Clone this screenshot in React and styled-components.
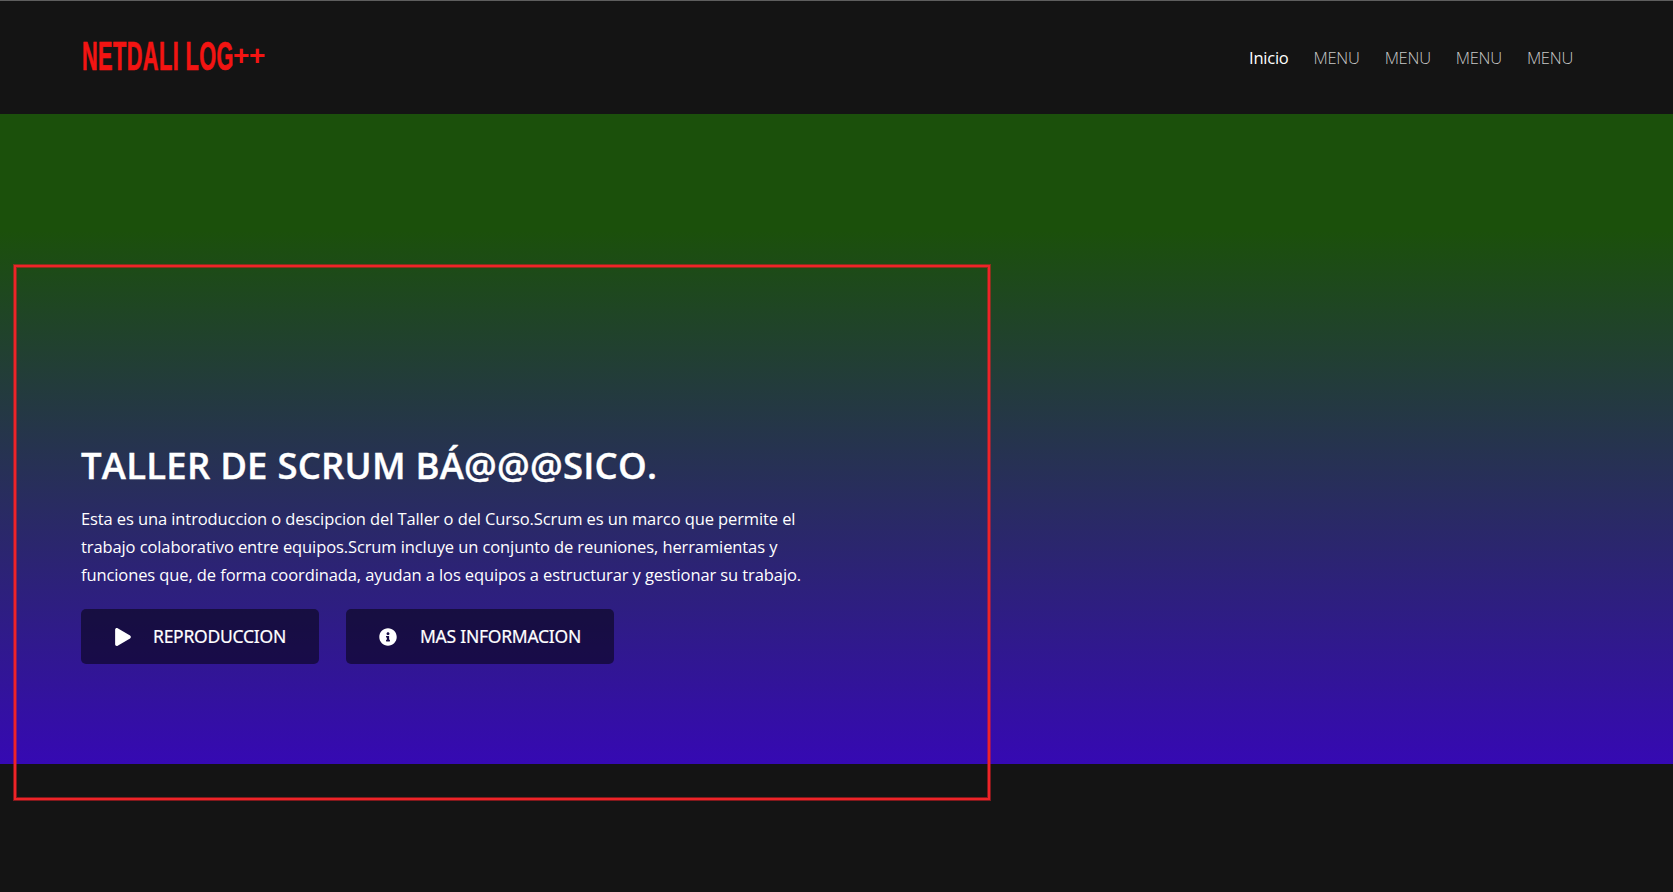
import React from "react";
import styled, { createGlobalStyle } from "styled-components";
import { FaPlay, FaInfoCircle } from "react-icons/fa";

const GlobalStyle = createGlobalStyle`
  *, *::before, *::after { box-sizing: border-box; }
  body {
    margin: 0;
    background: #141414;
    color: #fff;
    font-family: "Open Sans", "Noto Sans", sans-serif;
  }
`;

const Page = styled.div`
  position: relative;
  height: 892px;
  overflow: hidden;
  background: #141414;
`;

const Header = styled.header`
  display: flex;
  justify-content: space-between;
  align-items: flex-start;
  height: 114px;
  padding: 35px 100px 0 82px;
  border-top: 1px solid #5e5e5e;
`;

const Logo = styled.h1`
  display: flex;
  margin: 0;
  font-family: "Liberation Sans Narrow", "Liberation Sans", sans-serif;
  font-size: 41px;
  line-height: 40px;
  font-weight: 700;
  color: #f31412;
  white-space: nowrap;
`;

const LogoWord = styled.span`
  width: 151px;
  letter-spacing: 0.8px;
  -webkit-text-stroke: 0.7px #f31412;
  transform: scaleX(0.53);
  transform-origin: 0 0;
`;

const LogoPlus = styled.span`
  font-family: "Liberation Sans", sans-serif;
  font-size: 28px;
  line-height: 40px;
  letter-spacing: -0.3px;
`;

const Nav = styled.nav`
  display: flex;
  gap: 25px;
  padding-top: 10px;
`;

const NavLink = styled.a`
  font-size: 16.5px;
  line-height: 24px;
  letter-spacing: -0.25px;
  font-weight: ${(p) => (p.$active ? 500 : 300)};
  color: ${(p) => (p.$active ? "#fff" : "#c8c8c8")};
  text-decoration: none;
`;

const Hero = styled.main`
  height: 650px;
  padding: 326px 81px 0;
  background: linear-gradient(#1b500b 18%, #3609b3 100%);
`;

const Title = styled.h2`
  margin: 0;
  font-size: 36.5px;
  line-height: 50px;
  font-weight: 600;
  letter-spacing: 0.22px;
  white-space: nowrap;
  -webkit-text-stroke: 0.4px #fff;
`;

const Description = styled.p`
  width: 740px;
  margin: 15px 0 20px;
  font-size: 16.5px;
  line-height: 28px;
  letter-spacing: -0.1px;
`;

const Line = styled.span`
  display: block;
  white-space: nowrap;
`;

const Actions = styled.div`
  display: flex;
  gap: 27px;
`;

const Button = styled.button`
  display: flex;
  align-items: center;
  width: ${(p) => p.$width}px;
  height: 55px;
  padding: 0 0 0 33px;
  border: 0;
  border-radius: 5px;
  background: rgba(0, 0, 0, 0.5);
  color: #fff;
  font-family: "Noto Sans", sans-serif;
  font-size: 17.5px;
  letter-spacing: -0.25px;
  white-space: nowrap;
  svg { flex: none; margin-right: ${(p) => p.$gap}px; }
`;

const Label = styled.span`
  padding-bottom: 1px;
  -webkit-text-stroke: 0.2px #fff;
`;

const Frame = styled.div`
  position: absolute;
  left: 13px;
  top: 264px;
  width: 978px;
  height: 537px;
  border: 1px solid rgba(237, 28, 36, 0.5);
  pointer-events: none;
  &::before {
    content: "";
    position: absolute;
    inset: 0;
    border: 2px solid #ee2428;
    box-shadow: inset 0 0 0 1px rgba(237, 28, 36, 0.5);
  }
`;

export default function App() {
  return (
    <Page>
      <GlobalStyle />
      <Header>
        <Logo>
          <LogoWord>NETDALI LOG</LogoWord>
          <LogoPlus>++</LogoPlus>
        </Logo>
        <Nav>
          <NavLink $active>Inicio</NavLink>
          {[1, 2, 3, 4].map((n) => (
            <NavLink key={n}>MENU</NavLink>
          ))}
        </Nav>
      </Header>
      <Hero>
        <Title>TALLER DE SCRUM BÁ@@@SICO.</Title>
        <Description>
          <Line>Esta es una introduccion o descipcion del Taller o del Curso.Scrum es un marco que permite el</Line>
          <Line>trabajo colaborativo entre equipos.Scrum incluye un conjunto de reuniones, herramientas y</Line>
          <Line>funciones que, de forma coordinada, ayudan a los equipos a estructurar y gestionar su trabajo.</Line>
        </Description>
        <Actions>
          <Button $width={238} $gap={21}>
            <FaPlay size={18} />
            <Label>REPRODUCCION</Label>
          </Button>
          <Button $width={268} $gap={23}>
            <FaInfoCircle size={18} />
            <Label>MAS INFORMACION</Label>
          </Button>
        </Actions>
      </Hero>
      <Frame />
    </Page>
  );
}
